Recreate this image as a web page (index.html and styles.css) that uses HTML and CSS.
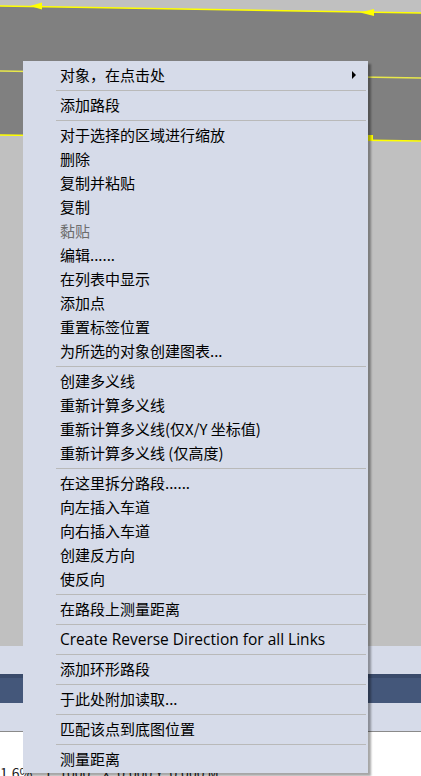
FILE: index.html
```html
<!DOCTYPE html>
<html lang="zh-CN">
<head>
    <meta charset="UTF-8">
    <meta name="viewport" content="width=device-width, initial-scale=1.0">
    <title>路网编辑</title>
    <link rel="stylesheet" href="styles.css">
</head>
<body>
    <div class="app">
        <!-- 路网画布 -->
        <svg class="network" width="421" height="646" viewBox="0 0 421 646">
            <polygon points="0,0 421,0 421,13 0,6" fill="#c0c0c0"/>
            <polygon points="0,6 421,13 421,141 0,135" fill="#808080"/>
            <line x1="0" y1="6" x2="421" y2="13" stroke="#ffff00" stroke-width="1.6"/>
            <polygon points="30,6 42,2.5 42,9.5" fill="#ffff00"/>
            <polygon points="360,12.5 374,9 374,16" fill="#ffff00"/>
            <line x1="0" y1="71" x2="421" y2="78" stroke="#e8e84a" stroke-width="1.4"/>
            <line x1="0" y1="135" x2="421" y2="141" stroke="#ffff00" stroke-width="1.6"/>
            <rect x="368" y="135" width="5" height="6" fill="#ffff00"/>
        </svg>
        <div class="panel"></div>
        <div class="tabbar"></div>
        <div class="panel"></div>
        <div class="status">
            <span class="zoom">1.6%</span>
            <span class="scale">1: 1000</span>
            <span class="coords">X: 0.000 Y: 0.000 M</span>
        </div>
    </div>

    <ul class="context-menu">
        <li class="item has-sub">对象，在点击处</li>
        <li class="sep"></li>
        <li class="item">添加路段</li>
        <li class="sep"></li>
        <li class="item">对于选择的区域进行缩放</li>
        <li class="item">删除</li>
        <li class="item">复制并粘贴</li>
        <li class="item">复制</li>
        <li class="item disabled">黏贴</li>
        <li class="item">编辑......</li>
        <li class="item">在列表中显示</li>
        <li class="item">添加点</li>
        <li class="item">重置标签位置</li>
        <li class="item">为所选的对象创建图表...</li>
        <li class="sep"></li>
        <li class="item">创建多义线</li>
        <li class="item">重新计算多义线</li>
        <li class="item">重新计算多义线(仅X/Y 坐标值)</li>
        <li class="item">重新计算多义线 (仅高度)</li>
        <li class="sep"></li>
        <li class="item">在这里拆分路段......</li>
        <li class="item">向左插入车道</li>
        <li class="item">向右插入车道</li>
        <li class="item">创建反方向</li>
        <li class="item">使反向</li>
        <li class="sep"></li>
        <li class="item">在路段上测量距离</li>
        <li class="sep"></li>
        <li class="item latin">Create Reverse Direction for all Links</li>
        <li class="sep"></li>
        <li class="item">添加环形路段</li>
        <li class="sep"></li>
        <li class="item">于此处附加读取...</li>
        <li class="sep"></li>
        <li class="item">匹配该点到底图位置</li>
        <li class="sep"></li>
        <li class="item">测量距离</li>
    </ul>
</body>
</html>
```

FILE: styles.css
```css
html, body {
    margin: 0;
    padding: 0;
}
body {
    font-family: 'Noto Sans CJK SC', 'Noto Sans', sans-serif;
    background-color: #ffffff;
    width: 421px;
    height: 776px;
    overflow: hidden;
    position: relative;
}
.app {
    display: flex;
    flex-direction: column;
    width: 421px;
}
.network {
    display: block;
    background-color: #c0c0c0;
}
.panel {
    height: 28px;
    background-color: #d6dbe9;
}
.tabbar {
    height: 25px;
    background-color: #44577a;
    border-top: 4px solid #3a4b6b;
}
.status {
    display: flex;
    align-items: flex-end;
    gap: 12px;
    height: 43px;
    border-top: 1px solid #8a8a8a;
    background-color: #ffffff;
    font-size: 14px;
    line-height: 16px;
    color: #222;
}
.status span {
    margin-bottom: -6px;
}

/* 右键菜单 */
.context-menu {
    position: absolute;
    left: 23px;
    top: 61px;
    width: 345px;
    margin: 0;
    padding: 2px 0;
    list-style: none;
    background-color: #d6dbe9;
    box-shadow: 3px 3px 2px rgba(0, 0, 0, 0.35);
}
.context-menu .item {
    position: relative;
    height: 24px;
    line-height: 24px;
    padding-left: 37px;
    font-size: 15px;
    color: #000;
    white-space: nowrap;
}
.context-menu .item.disabled {
    color: #6d6d6d;
}
.context-menu .item.latin {
    font-family: 'Open Sans', 'Noto Sans', sans-serif;
    font-size: 15.5px;
}
.context-menu .has-sub::after {
    content: '';
    position: absolute;
    right: 12px;
    top: 8px;
    border-left: 4px solid #000;
    border-top: 4px solid transparent;
    border-bottom: 4px solid transparent;
}
.context-menu .sep {
    height: 1px;
    margin: 3px 2px 2px 33px;
    background-color: #b9b9b9;
}
```
